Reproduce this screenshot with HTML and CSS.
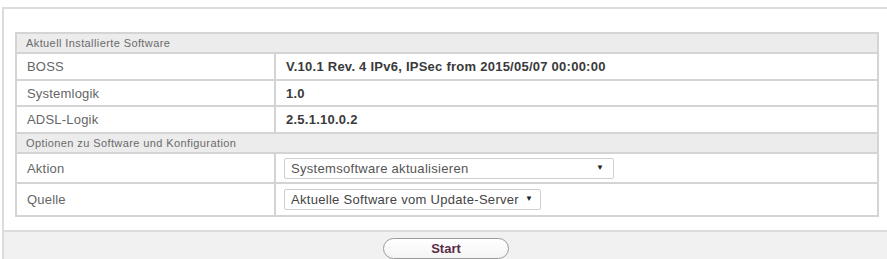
FILE: index.html
```html
<!DOCTYPE html>
<html lang="de">
<head>
<meta charset="utf-8">
<title>Software &amp; Konfiguration</title>
<link rel="stylesheet" href="styles.css">
</head>
<body>
<div class="panel">
  <div class="content">
    <table class="grid">
      <tr class="section"><td colspan="2">Aktuell Installierte Software</td></tr>
      <tr class="r27"><td class="label">BOSS</td><td class="value">V.10.1 Rev. 4 IPv6, IPSec from 2015/05/07 00:00:00</td></tr>
      <tr class="r26"><td class="label">Systemlogik</td><td class="value">1.0</td></tr>
      <tr class="r27"><td class="label">ADSL-Logik</td><td class="value">2.5.1.10.0.2</td></tr>
      <tr class="section"><td colspan="2">Optionen zu Software und Konfiguration</td></tr>
      <tr class="r30"><td class="label">Aktion</td><td class="field"><span class="select wide"><select><option>Systemsoftware aktualisieren</option></select></span></td></tr>
      <tr class="r33"><td class="label">Quelle</td><td class="field"><span class="select narrow"><select><option>Aktuelle Software vom Update-Server</option></select></span></td></tr>
    </table>
  </div>
  <div class="footer">
    <button class="start" type="button">Start</button>
  </div>
</div>
</body>
</html>
```
FILE: styles.css
```css
html, body {
  margin: 0;
  padding: 0;
  background: #fff;
  overflow: hidden;
}
body {
  font-family: "Liberation Sans", Arial, sans-serif;
  font-size: 12px;
  color: #555;
}
.panel {
  margin: 7px 0 0 2px;
  width: 900px;
  border-top: 2px solid #dcdcdc;
  border-left: 2px solid #dcdcdc;
}
.content {
  padding: 23px 0 13px 11px;
}
.grid {
  width: 864px;
  border-collapse: collapse;
  border: 2px solid #d4d4d4;
}
.grid td {
  border: 2px solid #d4d4d4;
  padding: 0 0 0 10px;
}
.section td {
  background: #ececec;
  height: 18px;
  font-size: 11px;
  letter-spacing: 0.4px;
  color: #6a6a6a;
  padding-left: 9px;
}
.r26 td { height: 24px; }
.r27 td { height: 25px; }
.r30 td { height: 28px; }
.r33 td { height: 31px; }
.label {
  width: 247px;
  font-size: 13px;
  letter-spacing: 0.2px;
  color: #666;
}
.value {
  font-size: 13px;
  letter-spacing: 0.25px;
  font-weight: bold;
  color: #3a3a3a;
}
.field {
  padding-left: 8px !important;
}
.select {
  position: relative;
  display: inline-block;
  vertical-align: middle;
}
.select select {
  appearance: none;
  -webkit-appearance: none;
  font-family: "Liberation Sans", Arial, sans-serif;
  font-size: 13px;
  letter-spacing: 0.3px;
  color: #555;
  background: #fff;
  border: 1px solid #cfcfcf;
  border-radius: 2px;
  height: 21px;
  padding: 0 20px 0 6px;
  margin: 0;
}
.select.wide select {
  width: 330px;
}
.select.narrow select {
  width: 257px;
  color: #444;
}
.select::after {
  content: "▼";
  position: absolute;
  right: 10px;
  top: 5px;
  font-size: 8px;
  color: #222;
  pointer-events: none;
}
.select.narrow::after {
  right: 8px;
}
.footer {
  border-top: 2px solid #dcdcdc;
  background: #f1f1f1;
  height: 22px;
  padding-top: 6px;
  padding-right: 14px;
  display: flex;
  justify-content: center;
  width: 884px;
}
.start {
  width: 126px;
  height: 21px;
  border: 1px solid #9a9a9a;
  border-radius: 11px;
  background: linear-gradient(#ffffff, #f4f4f4);
  font-family: "Liberation Sans", Arial, sans-serif;
  font-size: 13px;
  font-weight: bold;
  color: #5b2b45;
  padding: 0;
}
```
